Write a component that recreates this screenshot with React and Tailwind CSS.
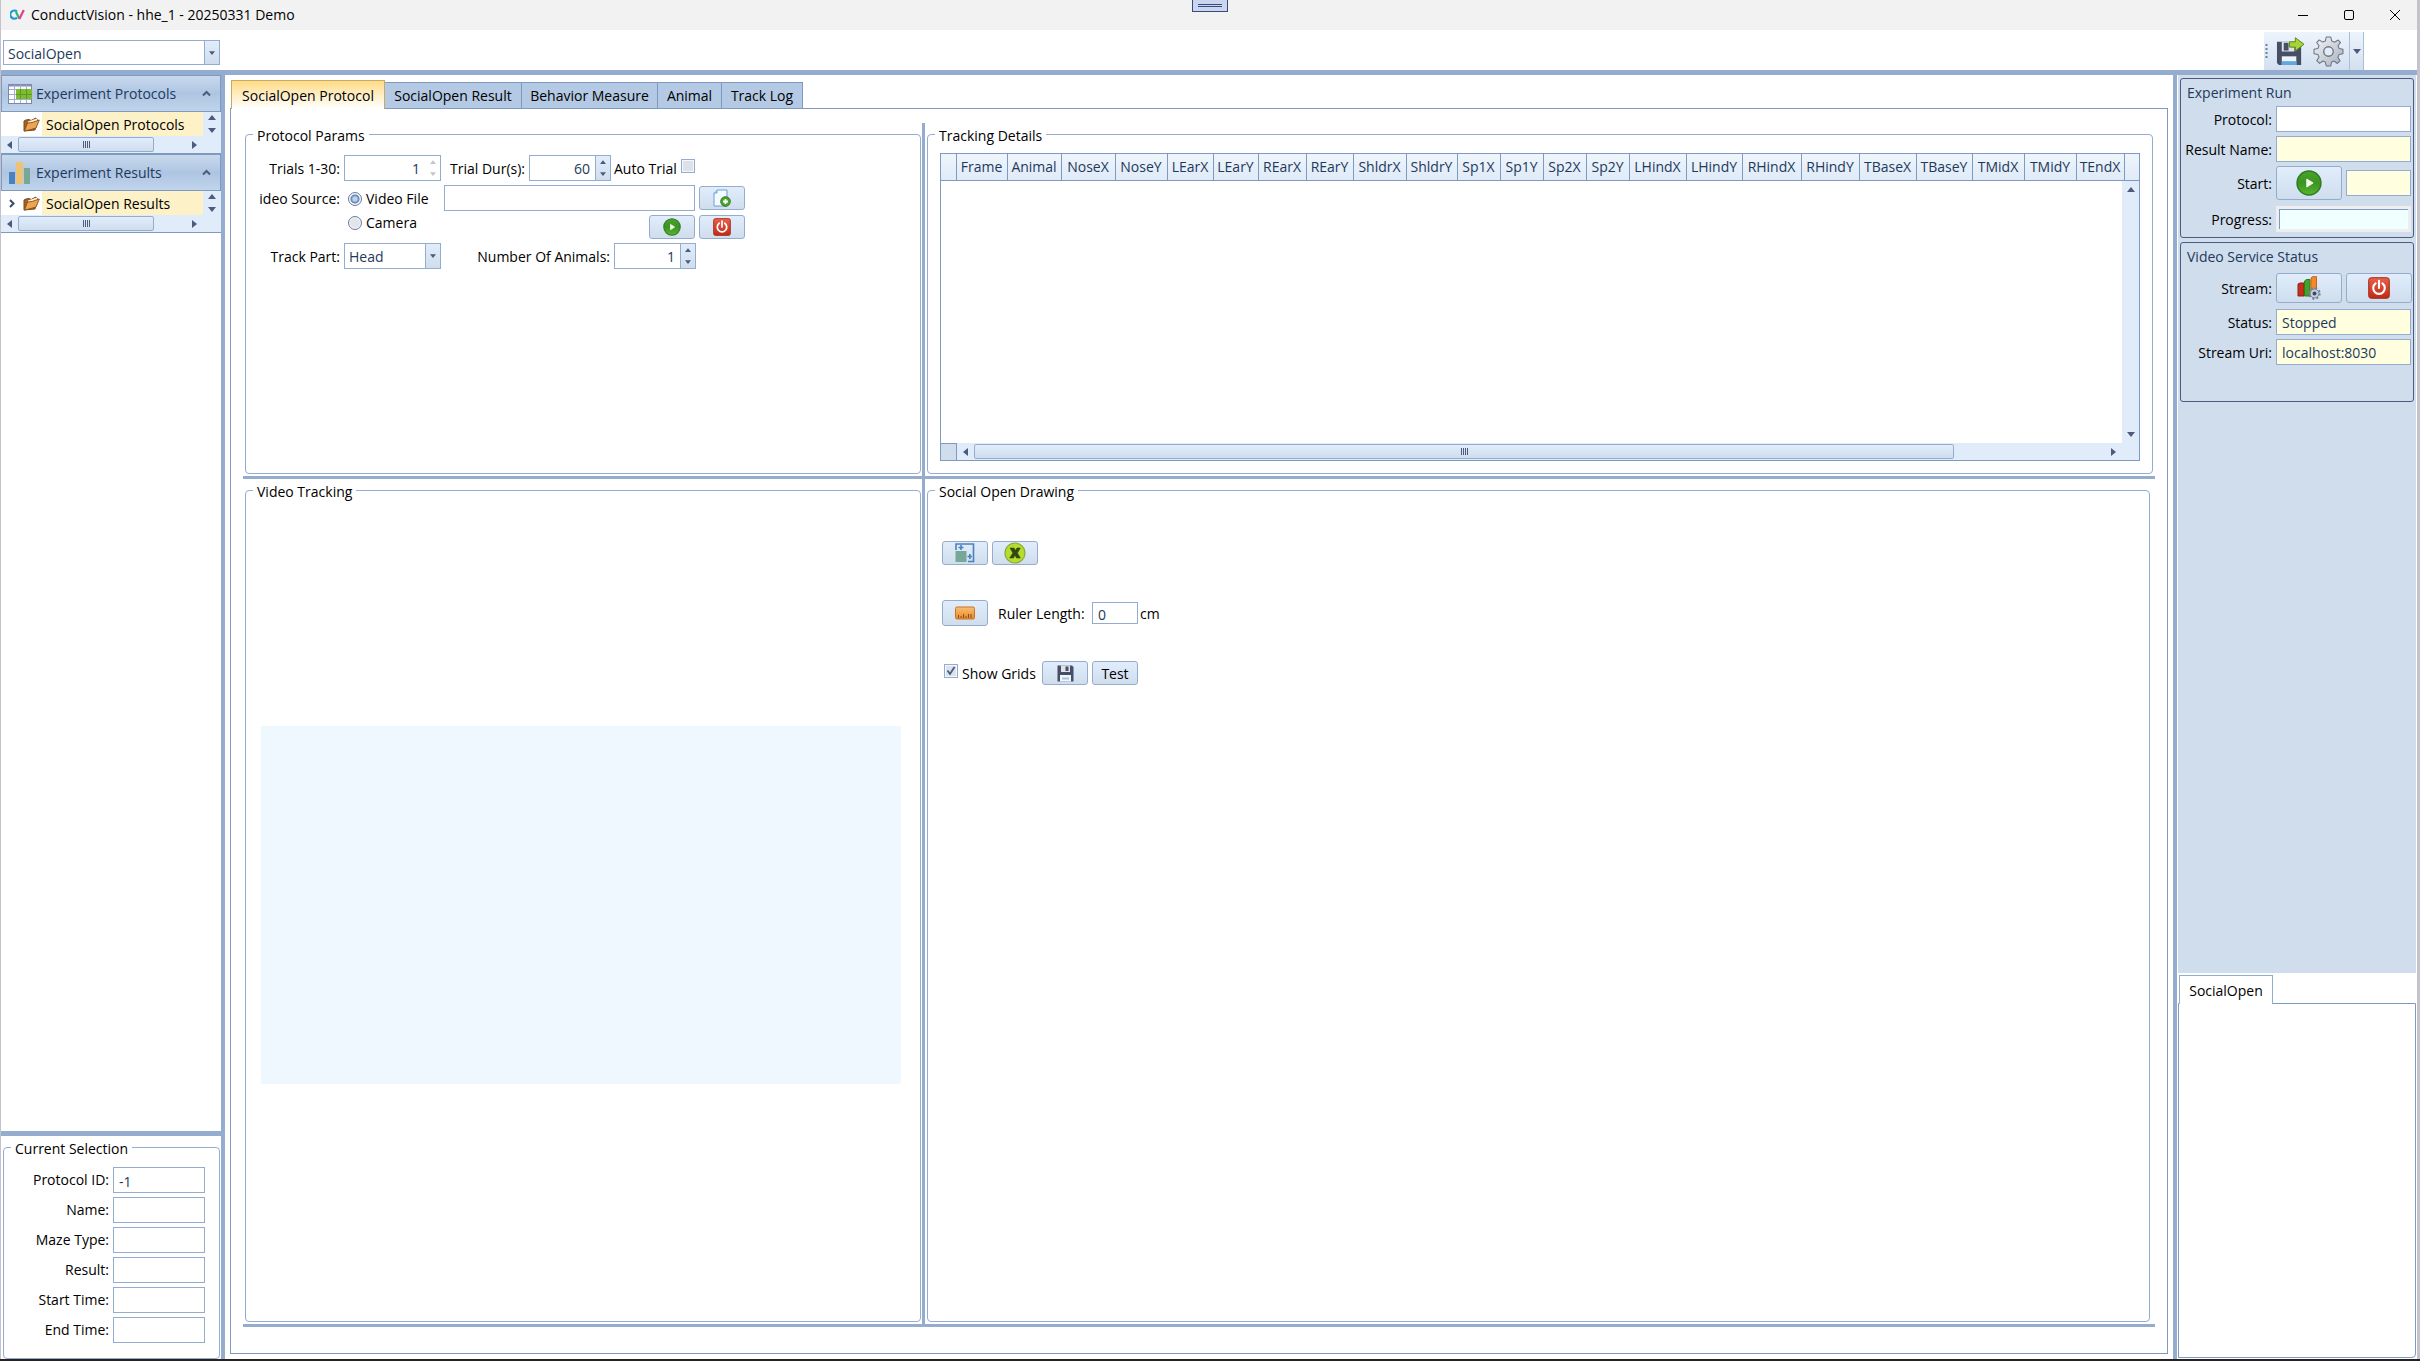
import { useState } from 'react';

const columns = [
  ['Frame', 'w-[51px]'],
  ['Animal', 'w-[54px]'],
  ['NoseX', 'w-[54px]'],
  ['NoseY', 'w-[52px]'],
  ['LEarX', 'w-[46px]'],
  ['LEarY', 'w-[45px]'],
  ['REarX', 'w-[48px]'],
  ['REarY', 'w-[47px]'],
  ['ShldrX', 'w-[53px]'],
  ['ShldrY', 'w-[51px]'],
  ['Sp1X', 'w-[43px]'],
  ['Sp1Y', 'w-[43px]'],
  ['Sp2X', 'w-[43px]'],
  ['Sp2Y', 'w-[43px]'],
  ['LHindX', 'w-[57px]'],
  ['LHindY', 'w-[56px]'],
  ['RHindX', 'w-[59px]'],
  ['RHindY', 'w-[58px]'],
  ['TBaseX', 'w-[57px]'],
  ['TBaseY', 'w-[56px]'],
  ['TMidX', 'w-[52px]'],
  ['TMidY', 'w-[52px]'],
  ['TEndX', 'w-[48px]'],
];

const tabs = [
  ['SocialOpen Protocol', 'w-[154px]'],
  ['SocialOpen Result', 'w-[137px]'],
  ['Behavior Measure', 'w-[136px]'],
  ['Animal', 'w-[64px]'],
  ['Track Log', 'w-[81px]'],
];

const selectionFields = [
  ['Protocol ID:', '-1'],
  ['Name:', ''],
  ['Maze Type:', ''],
  ['Result:', ''],
  ['Start Time:', ''],
  ['End Time:', ''],
];

const arrowPaths = {
  up: 'M0 5 L4 0 L8 5 Z',
  down: 'M0 0 L8 0 L4 5 Z',
  left: 'M5 0 L5 8 L0 4 Z',
  right: 'M0 0 L5 4 L0 8 Z',
};

const Arrow = ({ dir, small }) => {
  const flat = dir === 'up' || dir === 'down';
  const w = flat ? 8 : 5;
  const h = flat ? 5 : 8;
  return (
    <svg width={small ? 6 : w} height={small ? 4 : h} viewBox={`0 0 ${w} ${h}`} className="shrink-0">
      <path d={arrowPaths[dir]} fill="currentColor" />
    </svg>
  );
};

const PlayIcon = ({ size }) => (
  <svg width={size} height={size} viewBox="0 0 24 24">
    <defs>
      <linearGradient id="play" x1="0" y1="0" x2="0" y2="1">
        <stop offset="0" stopColor="#4aa32c" />
        <stop offset="0.5" stopColor="#3b9420" />
        <stop offset="1" stopColor="#57b52e" />
      </linearGradient>
    </defs>
    <circle cx="12" cy="12" r="11" fill="url(#play)" stroke="#2f7a22" strokeWidth="1.4" />
    <path d="M10 8.5 L15.5 12 L10 15.5 Z" fill="#f4f8ee" stroke="#f4f8ee" strokeLinejoin="round" />
  </svg>
);

const PowerIcon = ({ size }) => (
  <svg width={size} height={size} viewBox="0 0 22 22">
    <defs>
      <linearGradient id="power" x1="0" y1="0" x2="0" y2="1">
        <stop offset="0" stopColor="#e8604a" />
        <stop offset="1" stopColor="#c02a15" />
      </linearGradient>
    </defs>
    <rect x="0.7" y="0.7" width="20.6" height="20.6" rx="2.5" fill="url(#power)" stroke="#a82b1b" />
    <path d="M7.6 6.4 a5.8 5.8 0 1 0 6.8 0" fill="none" stroke="#fff" strokeWidth="2.1" strokeLinecap="round" />
    <path d="M11 3.8 V11" stroke="#fff" strokeWidth="2.1" strokeLinecap="round" />
  </svg>
);

const FolderIcon = () => (
  <svg width="17" height="15" viewBox="0 0 17 15" className="shrink-0">
    <path d="M1 14 L1 4 L3 3 L6 2.5 L8 3.5 L13 1 L14 3 L15 3 L12 13 Z" fill="#a0622a" stroke="#7c4a1c" />
    <path d="M5 4.5 L14 1.5 L14 6 L5 9 Z" fill="#fff3dc" />
    <path d="M1.5 14 L4.5 6 L9 5.5 L16.3 3 L13 11 L8 12.5 Z" fill="#eda552" stroke="#8a4d1a" strokeWidth="0.9" strokeLinejoin="round" />
  </svg>
);

const TableIcon = () => (
  <svg width="24" height="20" viewBox="0 0 24 20" className="shrink-0">
    <rect x="0.5" y="0.5" width="23" height="19" fill="#fbfcfe" stroke="#7a86ad" />
    <path d="M0 1.5 H24" stroke="#8490b8" strokeWidth="2" />
    <path d="M1 5.5 H23 M1 10.5 H23 M1 15.5 H23 M6.5 1 V19 M12.5 1 V19 M18.5 1 V19" stroke="#a3aecd" />
    <rect x="8" y="5" width="16" height="10" fill="#7dbb32" />
    <path d="M8 10.5 H24 M12.5 5 V15 M18.5 5 V15" stroke="#5d9a20" />
  </svg>
);

const BarsIcon = () => (
  <svg width="24" height="22" viewBox="0 0 24 22" className="shrink-0">
    <rect x="1" y="10" width="6" height="12" fill="#4a82bd" />
    <rect x="8" y="0" width="7" height="22" fill="#ecc374" />
    <rect x="16" y="6" width="6" height="16" fill="#76a797" />
  </svg>
);

const Floppy = ({ size, arrow }) => (
  <svg width={size} height={size} viewBox="0 0 30 30">
    <path d="M1 5 H24 Q26 5 26 7 V29 H3 L1 27 Z" fill="#474f66" />
    <rect x="6" y="5" width="13" height="10" fill="#dfe3ea" />
    <rect x="8" y="6" width="5" height="8" fill="#474f66" />
    <rect x="6" y="20" width="15" height="9" fill="#eef3f8" />
    <rect x="6" y="25" width="15" height="4" fill="#5fa9e0" />
    {arrow && (
      <path d="M14 5 H20 V0.8 L29 7.5 L20 14.5 V10.5 H14 Z" fill="#a9d534" stroke="#55871c" strokeLinejoin="round" />
    )}
  </svg>
);

const SmallFloppy = () => (
  <svg width="17" height="17" viewBox="0 0 17 17">
    <path d="M0.5 0.5 H15 L16.5 2 V16.5 H0.5 Z" fill="#474f66" />
    <rect x="4" y="0.5" width="9" height="6.5" fill="#dfe3ea" />
    <rect x="8.5" y="1.5" width="3" height="4.5" fill="#474f66" />
    <rect x="3" y="10" width="11" height="6.5" fill="#f3f6fa" />
    <rect x="5" y="12.5" width="7" height="2" fill="#9fc4e6" />
  </svg>
);

const Gear = ({ size }) => (
  <svg width={size} height={size} viewBox="0 0 30 30">
    <defs>
      <linearGradient id="gear" x1="0" y1="0" x2="1" y2="1">
        <stop offset="0" stopColor="#f4f6f8" />
        <stop offset="1" stopColor="#a9b0ba" />
      </linearGradient>
    </defs>
    <path
      d="M12.8 1 H17.2 L18.2 4.9 L20.8 6 L24.3 3.9 L26.6 6.2 L24.3 9.4 L25.2 12 L29 12.8 V17.2 L25.2 18 L24.1 20.7 L26.2 24 L23.5 26.6 L20.4 24.2 L18 25.2 L17.2 29 H12.8 L11.9 25.2 L9.5 24.2 L6.4 26.5 L3.6 23.8 L5.8 20.6 L4.8 18 L1 17.2 V12.8 L4.8 12 L5.8 9.4 L3.5 6.3 L6 3.8 L9.3 5.9 L12 4.8 Z"
      fill="url(#gear)"
      stroke="#6b7588"
      strokeLinejoin="round"
    />
    <circle cx="15" cy="15" r="4.6" fill="#e3ecf7" stroke="#6b7588" strokeWidth="1.3" />
  </svg>
);

const StreamIcon = () => (
  <svg width="24" height="24" viewBox="0 0 24 24">
    <path d="M1 8 L3 7 H7 V20 H1 Z" fill="#c3301f" stroke="#8d2014" />
    <path d="M7.5 5 L9.5 3.5 H13 V20 H7.5 Z" fill="#46a02c" stroke="#2f7a1c" />
    <path d="M14 2 L15.5 0.7 H19.5 V16 H14 Z" fill="#f08a2c" stroke="#c9631a" />
    <circle cx="17.5" cy="17.5" r="5.2" fill="none" stroke="#71829b" strokeWidth="2" strokeDasharray="2 2.08" />
    <circle cx="17.5" cy="17.5" r="4.4" fill="#c5d0dd" stroke="#71829b" />
    <circle cx="17.5" cy="17.5" r="2" fill="#3d4a60" />
  </svg>
);

const FileAddIcon = () => (
  <svg width="18" height="18" viewBox="0 0 18 18">
    <path d="M4 1 H14 V17 H1 V4 Z" fill="#f5fafe" stroke="#6f9fd0" />
    <path d="M4 1 V4 H1" fill="#cfe0f2" stroke="#6f9fd0" />
    <circle cx="12.5" cy="12.5" r="4.8" fill="#4aa52d" stroke="#2f7a1c" />
    <path d="M12.5 10 V15 M10 12.5 H15" stroke="#fff" strokeWidth="1.8" />
  </svg>
);

const ZoneIcon = () => (
  <svg width="20" height="20" viewBox="0 0 20 20">
    <path d="M1 7 V1 H18.5 V18.5 H13" fill="none" stroke="#4a82bd" strokeWidth="1.6" />
    <rect x="0.5" y="8" width="11" height="11" fill="#76a797" />
    <path d="M3.5 4.5 H8.5 M6 2 V7 M12.5 13.5 H17 M14.8 11 V16" stroke="#4a82bd" strokeWidth="1.6" />
  </svg>
);

const ClearIcon = () => (
  <svg width="22" height="22" viewBox="0 0 22 22">
    <circle cx="11" cy="11" r="10" fill="#b5dd30" stroke="#8aa83a" strokeWidth="1.2" />
    <path d="M6 6 H10 L11.3 8.6 L13 6 H16.3 L13.4 11 L16.3 16 H12.6 L11 13.2 L9.4 16 H5.7 L8.9 11 Z" fill="#33470f" stroke="#33470f" strokeWidth="0.6" />
  </svg>
);

const RulerIcon = () => (
  <svg width="20" height="14" viewBox="0 0 20 14">
    <defs>
      <linearGradient id="ruler" x1="0" y1="0" x2="0" y2="1">
        <stop offset="0" stopColor="#f8c071" />
        <stop offset="1" stopColor="#e8882c" />
      </linearGradient>
    </defs>
    <rect x="0.5" y="1" width="19" height="12" rx="1.5" fill="url(#ruler)" stroke="#c87424" />
    <path d="M3.5 12 V9 M6 12 V10 M8.5 12 V8 M11 12 V10 M13.5 12 V8 M16 12 V8" stroke="#8f4d14" />
  </svg>
);

const Button = ({ label, className, children }) => (
  <button
    type="button"
    aria-label={label}
    className={`flex shrink-0 items-center justify-center rounded-[3px] border border-[#94adcf] bg-linear-to-b from-[#e1edfb] to-[#cfdded] ${className}`}
  >
    {children}
  </button>
);

const TextBox = ({ label, value = '', className }) => (
  <input
    aria-label={label}
    defaultValue={value}
    className={`min-w-0 border border-[#94adcf] px-[5px] text-[#1e395b] outline-none ${className}`}
  />
);

const GroupBox = ({ title, className, children }) => (
  <fieldset className={`flex min-h-0 min-w-0 flex-col rounded-[4px] border border-[#94adcf] px-[7px] ${className}`}>
    <legend className="h-[22px] px-1 pt-[3px] leading-[19px]">{title}</legend>
    {children}
  </fieldset>
);

const Spinner = ({ label, value, disabled, className }) => (
  <div className={`flex h-[26px] shrink-0 border border-[#94adcf] bg-white ${className}`}>
    <input
      aria-label={label}
      defaultValue={value}
      disabled={disabled}
      className="min-w-0 flex-1 pr-[5px] pt-[2px] text-right text-[#1e395b] outline-none"
    />
    <div
      className={
        disabled
          ? 'grid w-[15px] grid-rows-2 text-[#c3c5cc]'
          : 'grid w-[15px] grid-rows-2 border-l border-[#94adcf] bg-linear-to-b from-[#e1edfb] to-[#cfdded] text-[#4c5a7d]'
      }
    >
      <button type="button" aria-label={`${label} up`} disabled={disabled} className="flex items-center justify-center">
        <Arrow dir="up" small />
      </button>
      <button type="button" aria-label={`${label} down`} disabled={disabled} className="flex items-center justify-center">
        <Arrow dir="down" small />
      </button>
    </div>
  </div>
);

const Dropdown = ({ label, value, className }) => (
  <div className={`relative ${className}`}>
    <select
      aria-label={label}
      className="h-full w-full appearance-none border border-[#94adcf] bg-white pl-[4px] pt-[2px] text-[#1e395b] outline-none"
    >
      <option>{value}</option>
    </select>
    <span className="pointer-events-none absolute inset-y-0 right-0 flex w-4 items-center justify-center border border-[#94adcf] bg-linear-to-b from-[#e1edfb] to-[#cfdded] text-[#4c5a7d]">
      <Arrow dir="down" small />
    </span>
  </div>
);

const CheckBox = ({ id, checked }) => (
  <span className="grid size-[14px] shrink-0 place-items-center">
    <input
      id={id}
      type="checkbox"
      defaultChecked={checked}
      className="peer col-start-1 row-start-1 size-[14px] appearance-none border border-[#94adcf] bg-[#dde2ea] shadow-[inset_0_0_0_1px_#f4f7fb]"
    />
    <svg viewBox="0 0 10 10" className="pointer-events-none invisible z-10 col-start-1 row-start-1 size-[10px] peer-checked:visible">
      <path d="M1.5 4.5 L4 8 L8.5 1" fill="none" stroke="#4c5a7d" strokeWidth="1.8" />
    </svg>
  </span>
);

const Radio = ({ label, checked }) => (
  <label className="flex items-center gap-1">
    <input
      type="radio"
      name="source"
      defaultChecked={checked}
      className="size-[14px] appearance-none rounded-full border border-[#6a7da0] bg-[#e3e5e8] shadow-[inset_0_0_0_1px_#f4f7fb] checked:bg-[radial-gradient(circle,#b9d3ee_0_2px,#5b7aa8_4px,#eef3f9_5px)]"
    />
    <span className="pt-px">{label}</span>
  </label>
);

const HScroll = ({ thumb, rest }) => (
  <div className="flex h-[17px] min-w-0 flex-1 items-center bg-[#e1ecfa] text-[#4c5a7d]">
    <span className="flex w-[17px] shrink-0 justify-center">
      <Arrow dir="left" />
    </span>
    <div className={`flex h-[15px] items-center justify-center gap-px rounded-[2px] border border-[#94adcf] bg-linear-to-b from-[#e1edfb] to-[#cfdded] ${thumb}`}>
      <span className="h-[7px] w-px bg-[#4c5a7d]" />
      <span className="h-[7px] w-px bg-[#4c5a7d]" />
      <span className="h-[7px] w-px bg-[#4c5a7d]" />
      <span className="h-[7px] w-px bg-[#4c5a7d]" />
    </div>
    <div className={rest} />
    <span className="flex w-[17px] shrink-0 justify-center">
      <Arrow dir="right" />
    </span>
  </div>
);

const TreePanel = ({ title, icon, item, expandable }) => (
  <section className="border-b border-[#7f9ac0]">
    <button
      type="button"
      className="flex h-[37px] w-full items-center border border-[#7f9ac0] bg-linear-to-b from-[#c8d9ed] via-[#aec5e2] to-[#c0d4eb] pl-[6px] text-[#1e395b]"
    >
      {icon}
      <span className="ml-1 flex-1 text-left">{title}</span>
      <svg width="9" height="7" viewBox="0 0 9 7" className="mr-[9px]">
        <path d="M1 5.5 L4.5 2 L8 5.5" fill="none" stroke="#4c5a7d" strokeWidth="2" />
      </svg>
    </button>
    <div className="flex h-[24px]">
      <div className="flex w-[41px] items-center pl-2">
        <span className="w-[14px] shrink-0">
          {expandable && (
            <svg width="6" height="9" viewBox="0 0 6 9">
              <path d="M1 1 L4.5 4.5 L1 8" fill="none" stroke="#3c4966" strokeWidth="2" />
            </svg>
          )}
        </span>
        <FolderIcon />
      </div>
      <div className="flex flex-1 items-center bg-[#fdf1c8] pl-1 pt-px">{item}</div>
      <div className="flex w-[18px] flex-col items-center justify-between bg-[#e1ecfa] py-[3px] text-[#4c5a7d]">
        <Arrow dir="up" />
        <Arrow dir="down" />
      </div>
    </div>
    <div className="flex bg-[#e1ecfa] pr-[18px]">
      <HScroll thumb="flex-[134]" rest="flex-[32]" />
    </div>
  </section>
);

const Sidebar = () => (
  <aside className="flex w-[220px] shrink-0 flex-col">
    <TreePanel title="Experiment Protocols" icon={<TableIcon />} item="SocialOpen Protocols" />
    <TreePanel title="Experiment Results" icon={<BarsIcon />} item="SocialOpen Results" expandable />
    <div className="flex-1" />
    <div className="h-[5px] bg-[#94adcf]" />
    <GroupBox title="Current Selection" className="mr-px ml-[2px]">
      <div className="flex flex-col gap-1 pt-[9px] pb-[15px]">
        {selectionFields.map(([label, value]) => (
          <label key={label} className="flex items-center justify-end gap-1 pr-[7px]">
            {label}
            <TextBox label={label} value={value} className="h-[26px] w-[92px] pt-[2px]" />
          </label>
        ))}
      </div>
    </GroupBox>
  </aside>
);

const ProtocolParams = () => (
  <GroupBox title="Protocol Params" className="mr-px mb-[2px] ml-[2px]">
    <div className="grid grid-cols-[87px_1fr] gap-x-1 gap-y-[4px] pt-[10px] whitespace-nowrap">
      <span className="self-center pt-px text-right">Trials 1-30:</span>
      <div className="flex items-center">
        <Spinner label="Trials" value="1" disabled className="w-[97px]" />
        <span className="w-[84px] pt-px text-right">Trial Dur(s):</span>
        <Spinner label="Trial duration" value="60" className="ml-1 w-[82px]" />
        <label htmlFor="auto" className="ml-[3px] w-[67px] pt-px">Auto Trial</label>
        <span className="pb-[4px]">
          <CheckBox id="auto" />
        </span>
      </div>

      <span className="flex h-[26px] items-center justify-end pt-px">ideo Source:</span>
      <div className="grid grid-cols-[96px_251px_46px] gap-x-1">
        <div className="flex flex-col gap-[3px] pt-[3px] pl-1">
          <Radio label="Video File" checked />
          <Radio label="Camera" />
        </div>
        <div className="flex flex-col items-end gap-[4px]">
          <TextBox label="Video file" className="h-[26px] w-full" />
          <Button label="Play" className="h-[24px] w-[46px]"><PlayIcon size={18} /></Button>
        </div>
        <div className="flex flex-col gap-[5px] pt-px">
          <Button label="Add file" className="h-[24px] w-[46px]"><FileAddIcon /></Button>
          <Button label="Stop" className="h-[24px] w-[46px]"><PowerIcon size={18} /></Button>
        </div>
      </div>

      <span className="self-center pt-px text-right">Track Part:</span>
      <div className="flex items-center">
        <Dropdown label="Track part" value="Head" className="h-[26px] w-[97px]" />
        <span className="w-[169px] pt-px text-right">Number Of Animals:</span>
        <Spinner label="Number of animals" value="1" className="ml-1 w-[82px]" />
      </div>
    </div>
  </GroupBox>
);

const TrackingDetails = () => (
  <GroupBox title="Tracking Details" className="mr-[2px] mb-[2px] ml-[2px]">
    <div className="mt-[8px] mr-[5px] mb-3 ml-[5px] flex min-h-0 flex-1 flex-col border border-[#7f9ac0]">
      <table className="w-full table-fixed border-collapse text-[#1e395b]">
        <thead>
          <tr className="h-[26px] bg-linear-to-b from-[#eff5fc] to-[#dfebf8]">
            <th className="w-[15px] border-r border-b border-[#7f9ac0]" />
            {columns.map(([name, width]) => (
              <th key={name} className={`overflow-hidden border-r border-b border-[#7f9ac0] px-0 pt-px text-center font-normal ${width}`}>
                {name}
              </th>
            ))}
            <th className="border-b border-[#7f9ac0]" />
          </tr>
        </thead>
      </table>
      <div className="flex flex-1">
        <div className="flex-1" />
        <div className="flex w-[17px] flex-col items-center justify-between bg-[#e1ecfa] py-[6px] text-[#4c5a7d]">
          <Arrow dir="up" />
          <Arrow dir="down" />
        </div>
      </div>
      <div className="flex bg-[#e1ecfa] pr-[17px]">
        <div className="w-[16px] border-t border-r border-[#7f9ac0] bg-[#cfdded]" />
        <HScroll thumb="flex-[981]" rest="flex-[151]" />
      </div>
    </div>
  </GroupBox>
);

const VideoTracking = () => (
  <GroupBox title="Video Tracking" className="mr-px mb-[2px] ml-[2px]">
    <div className="flex-[225]" />
    <div className="mr-[12px] ml-[8px] flex-[359] bg-[#f0f8ff]" />
    <div className="flex-[237]" />
  </GroupBox>
);

const SocialOpenDrawing = () => (
  <GroupBox title="Social Open Drawing" className="mr-[5px] mb-[2px] ml-[2px]">
    <div className="flex flex-col gap-[35px] pt-[40px] pl-[7px]">
      <div className="flex gap-1">
        <Button label="Draw zone" className="h-[24px] w-[46px]"><ZoneIcon /></Button>
        <Button label="Clear zones" className="h-[24px] w-[46px]"><ClearIcon /></Button>
      </div>
      <div className="flex items-center">
        <Button label="Ruler" className="h-[26px] w-[46px]"><RulerIcon /></Button>
        <label htmlFor="ruler-length" className="ml-[10px] w-[94px] pt-px">Ruler Length:</label>
        <input
          id="ruler-length"
          defaultValue="0"
          className="h-[22px] w-[46px] border border-[#94adcf] px-[5px] pt-[3px] text-[#1e395b] outline-none"
        />
        <span className="ml-[2px] pt-px">cm</span>
      </div>
      <div className="flex items-center">
        <span className="pb-[4px] pl-[2px]">
          <CheckBox id="grids" checked />
        </span>
        <label htmlFor="grids" className="ml-[4px] w-[80px] pt-px">Show Grids</label>
        <Button label="Save drawing" className="h-[24px] w-[46px]"><SmallFloppy /></Button>
        <Button className="ml-1 h-[24px] w-[46px] pt-px">Test</Button>
      </div>
    </div>
  </GroupBox>
);

const Workspace = () => {
  const [active, setActive] = useState(0);
  return (
    <main className="flex min-w-0 flex-1 flex-col p-[5px]">
      <div role="tablist" className="flex h-[28px] items-end pl-px">
        {tabs.map(([name, width], i) => (
          <button
            key={name}
            type="button"
            role="tab"
            aria-selected={i === active}
            onClick={() => setActive(i)}
            className={
              i === active
                ? `z-10 -mb-px h-[29px] border border-b-0 border-[#c5ab64] bg-linear-to-b from-[#ffdb84] to-white pt-[2px] ${width}`
                : `h-[26px] border-t border-r border-[#7f9ac0] bg-[#b4c9e4] pt-px ${width}`
            }
          >
            {name}
          </button>
        ))}
      </div>
      <div className="flex min-h-0 flex-1 flex-col border border-[#7f9ac0] px-3 pt-[14px] pb-[26px]">
        <div className="grid min-h-0 flex-1 grid-cols-[679fr_3px_1230fr] grid-rows-[353fr_3px_845fr]">
          <ProtocolParams />
          <div className="row-span-3 bg-[#94adcf]" />
          <TrackingDetails />
          <div className="bg-[#94adcf]" />
          <div className="bg-[#94adcf]" />
          <VideoTracking />
          <SocialOpenDrawing />
        </div>
        <div className="h-[3px] bg-[#94adcf]" />
      </div>
    </main>
  );
};

const RunRow = ({ label, children }) => (
  <div className="flex items-center gap-1">
    <span className="w-[91px] shrink-0 pt-px text-right whitespace-nowrap">{label}</span>
    {children}
  </div>
);

const RunPanel = () => (
  <aside className="flex w-[240px] shrink-0 flex-col pr-px pl-px">
    <div className="flex flex-1 flex-col gap-1 bg-[#cfdded] px-[2px] pt-[3px]">
      <section className="h-[160px] rounded-[3px] border border-[#4c5a7d] pr-[2px]">
        <h2 className="pt-1 pl-[6px] text-[#1e395b]">Experiment Run</h2>
        <div className="flex flex-col gap-1 pt-[3px]">
          <RunRow label="Protocol:">
            <TextBox label="Protocol" className="h-[26px] flex-1 bg-white" />
          </RunRow>
          <RunRow label="Result Name:">
            <TextBox label="Result name" className="h-[26px] flex-1 bg-[#ffffe0]" />
          </RunRow>
          <RunRow label="Start:">
            <Button label="Start" className="h-[34px] w-[66px]"><PlayIcon size={26} /></Button>
            <TextBox label="Elapsed" className="h-[26px] flex-1 bg-[#ffffe0]" />
          </RunRow>
          <div className="pt-[2px]">
            <RunRow label="Progress:">
              <div role="progressbar" aria-label="Progress" className="h-[26px] flex-1 border-2 border-[#efeeee] bg-[#efeeee] p-px">
                <div className="h-full border-t border-l border-[#7f9ac0] bg-[#f0ffff]" />
              </div>
            </RunRow>
          </div>
        </div>
      </section>
      <section className="h-[160px] rounded-[3px] border border-[#4c5a7d] pr-[2px]">
        <h2 className="pt-1 pl-[6px] text-[#1e395b]">Video Service Status</h2>
        <div className="flex flex-col gap-1 pt-[6px]">
          <div className="pb-[2px]">
            <RunRow label="Stream:">
              <Button label="Start stream" className="h-[30px] w-[66px]"><StreamIcon /></Button>
              <Button label="Stop stream" className="h-[30px] w-[66px]"><PowerIcon size={22} /></Button>
            </RunRow>
          </div>
          <RunRow label="Status:">
            <TextBox label="Status" value="Stopped" className="h-[26px] flex-1 bg-[#ffffe0] pt-px" />
          </RunRow>
          <RunRow label="Stream Uri:">
            <TextBox label="Stream Uri" value="localhost:8030" className="h-[26px] flex-1 bg-[#ffffe0] pt-px" />
          </RunRow>
        </div>
      </section>
    </div>
    <div className="flex h-[386px] flex-col pt-[2px]">
      <button type="button" className="z-10 -mb-px ml-px h-[29px] w-[94px] border border-b-0 border-[#94adcf] bg-white pt-px">
        SocialOpen
      </button>
      <div className="mb-px flex-1 rounded-br-[4px] border border-[#7f9ac0]" />
    </div>
  </aside>
);

const TitleBar = () => (
  <header className="flex h-[30px] shrink-0 items-center bg-[#f2f2f2] pr-[16px] pl-[9px]">
    <svg width="15" height="12" viewBox="0 0 15 12">
      <path d="M7 2.6 A4 4 0 1 0 7 8.6" fill="none" stroke="#1d9ad6" strokeWidth="2.2" />
      <path d="M6 3 L9.3 9.5" stroke="#2bb673" strokeWidth="2.2" />
      <path d="M9.3 10 L13.8 1" stroke="#e5408c" strokeWidth="2.2" />
    </svg>
    <h1 className="ml-[6px] flex-1">ConductVision - hhe_1 - 20250331 Demo</h1>
    <div className="flex gap-[34px] pb-px">
      <button type="button" aria-label="Minimize">
        <svg width="12" height="12" viewBox="0 0 12 12"><path d="M1 6.5 H11" stroke="#000" /></svg>
      </button>
      <button type="button" aria-label="Maximize">
        <svg width="12" height="12" viewBox="0 0 12 12"><rect x="1.5" y="1.5" width="9" height="9" rx="1.5" fill="none" stroke="#000" /></svg>
      </button>
      <button type="button" aria-label="Close">
        <svg width="12" height="12" viewBox="0 0 12 12"><path d="M1 1 L11 11 M11 1 L1 11" stroke="#000" /></svg>
      </button>
    </div>
  </header>
);

const Toolbar = () => (
  <div className="flex h-[40px] shrink-0 items-end justify-between pr-[53px] pl-[2px]">
    <Dropdown label="Maze" value="SocialOpen" className="mb-[5px] h-[25px] w-[217px]" />
    <div className="flex h-[38px] items-center bg-linear-to-b from-[#edf4fc] to-[#d3e0f0]">
      <svg width="3" height="17" viewBox="0 0 3 17" className="mr-[8px] ml-px">
        <path d="M1.5 1 V17" stroke="#6f7f9e" strokeWidth="2" strokeDasharray="2 2" />
      </svg>
      <button type="button" aria-label="Save"><Floppy size={29} arrow /></button>
      <button type="button" aria-label="Settings" className="ml-[8px]"><Gear size={31} /></button>
      <button type="button" aria-label="More" className="ml-[5px] flex h-full w-[15px] items-center justify-center border-x border-[#a9bedb] text-[#4c5a7d]">
        <Arrow dir="down" />
      </button>
    </div>
  </div>
);

const App = () => (
  <div className="relative flex min-h-screen flex-col bg-[#c4c3cb] pr-[3px] pl-px font-['Open_Sans','Noto_Sans',sans-serif] text-[14px] leading-[20px] text-black">
    <div className="flex flex-1 flex-col bg-white">
      <TitleBar />
      <Toolbar />
      <div className="h-[5px] bg-[#94adcf]" />
      <div className="flex flex-1">
        <Sidebar />
        <div className="w-[4px] bg-[#94adcf]" />
        <Workspace />
        <div className="w-[4px] bg-[#94adcf]" />
        <RunPanel />
      </div>
    </div>
    <div className="-mr-[3px] -ml-px h-[2px] bg-[#26221f]" />
    <div className="absolute top-0 left-1/2 flex h-[12px] w-[36px] -translate-x-1/2 flex-col justify-center gap-px border border-t-0 border-[#3d4878] bg-[#c9d6f0] px-[5px]">
      <span className="h-px bg-[#3d4878]" />
      <span className="h-px bg-[#3d4878]" />
    </div>
  </div>
);

export default App;
